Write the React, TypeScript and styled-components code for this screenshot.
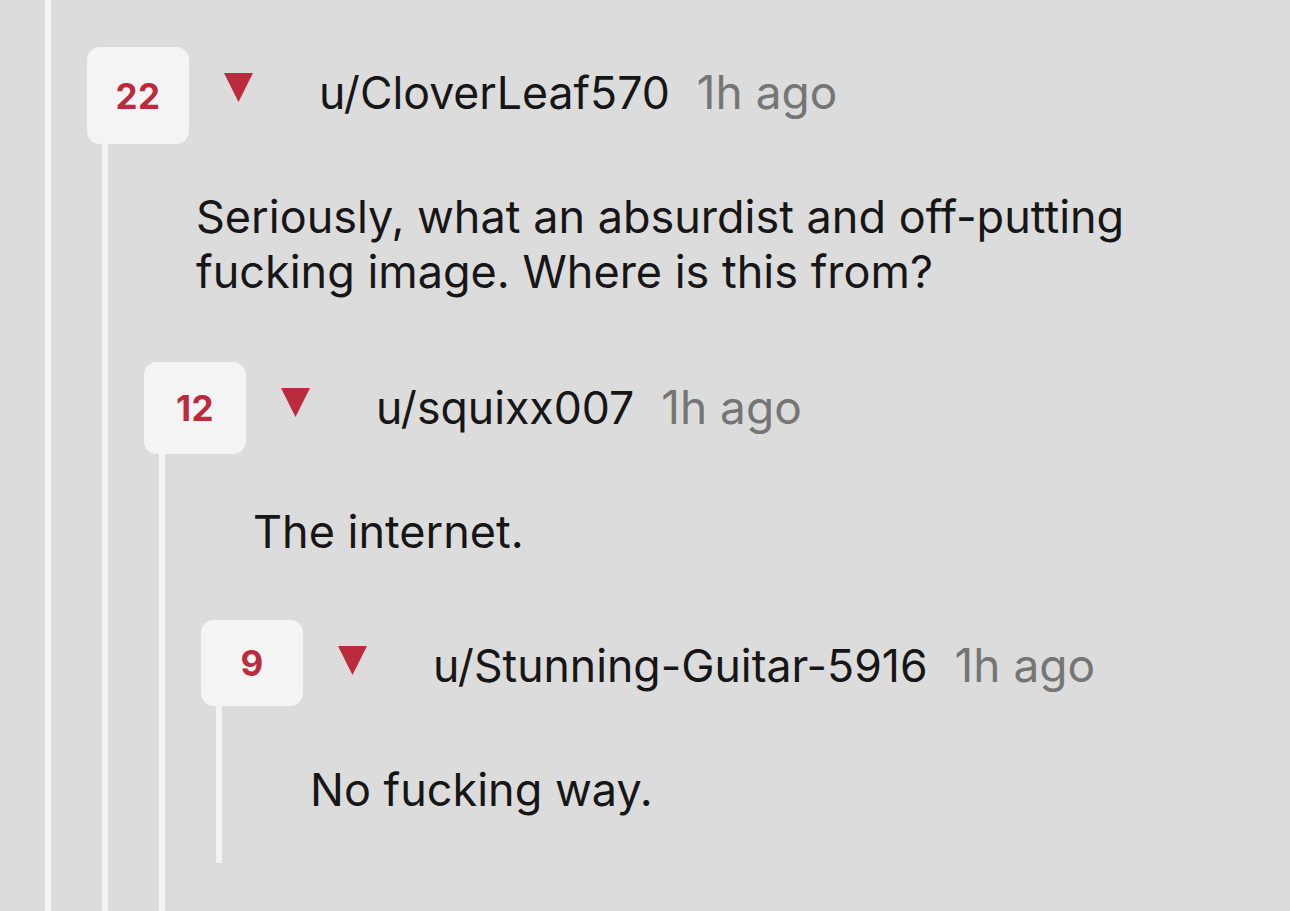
import React, { FC, ReactNode } from "react";
import styled, { createGlobalStyle } from "styled-components";

const GlobalStyle = createGlobalStyle`
  html, body {
    margin: 0;
    padding: 0;
    background: #dcdcdc;
    overflow: hidden;
  }
  body {
    font-family: Inter, "Noto Sans", "Liberation Sans", sans-serif;
    color: #161616;
  }
`;

const HEADER_H = 97;

const Page = styled.div`
  height: 911px;
  overflow: hidden;
  padding: 0 40px 0 30px;
  box-sizing: border-box;
`;

const Thread = styled.div`
  display: flex;
`;

const Rail = styled.div<{ $lift?: number }>`
  flex-shrink: 0;
  width: 6px;
  margin: ${(p) => -(p.$lift ?? 0)}px 36px 0 15px;
  background: #f4f4f4;
`;

const Replies = styled.div<{ $trail?: number }>`
  flex: 1;
  min-width: 0;
  display: flex;
  flex-direction: column;
  padding-bottom: ${(p) => p.$trail ?? 0}px;
`;

const CommentBlock = styled.div<{ $gap: number }>`
  display: flex;
  flex-direction: column;
  margin-top: ${(p) => p.$gap}px;
`;

const Header = styled.div`
  display: flex;
  align-items: flex-start;
  height: ${HEADER_H}px;
`;

const ScoreBox = styled.div<{ $h: number }>`
  flex-shrink: 0;
  width: 102px;
  height: ${(p) => p.$h}px;
  border-radius: 13px;
  background: #f4f4f4;
  display: flex;
  align-items: center;
  justify-content: center;
  color: #bc2a3d;
  font-size: 35px;
  font-weight: 700;
  letter-spacing: 0.5px;
`;

const Caret = styled.svg`
  flex-shrink: 0;
  width: 29px;
  height: 29px;
  margin: 26px 0 0 35px;
  fill: #bc2a3d;
`;

const Author = styled.div`
  margin: 18px 0 0 66px;
  font-size: 44.6px;
  line-height: 1.2;
  white-space: nowrap;
`;

const Age = styled.span`
  margin-left: 27px;
  font-size: 46px;
  color: #757575;
`;

const Body = styled.p`
  margin: 0;
  padding: 45px 0 46px 52px;
  font-size: 45px;
  line-height: 55px;
`;

type CommentProps = {
  score: number;
  boxH: number;
  user: string;
  age: string;
  text: string;
  gap: number;
  trail?: number;
  children?: ReactNode;
};

const Comment: FC<CommentProps> = ({
  score,
  boxH,
  user,
  age,
  text,
  gap,
  trail,
  children,
}) => (
  <CommentBlock $gap={gap}>
    <Header>
      <ScoreBox $h={boxH}>{score}</ScoreBox>
      <Caret viewBox="0 0 29 29">
        <polygon points="0,0 29,0 14.5,29" />
      </Caret>
      <Author>
        {user}
        <Age>{age}</Age>
      </Author>
    </Header>
    <Thread>
      <Rail $lift={HEADER_H - boxH} />
      <Replies $trail={trail}>
        <Body>{text}</Body>
        {children}
      </Replies>
    </Thread>
  </CommentBlock>
);

const App: FC = () => (
  <>
    <GlobalStyle />
    <Page>
      <Thread>
        <Rail />
        <Replies $trail={400}>
          <Comment
            score={22}
            boxH={97}
            user="u/CloverLeaf570"
            age="1h ago"
            text="Seriously, what an absurdist and off-putting fucking image. Where is this from?"
            gap={47}
            trail={300}
          >
            <Comment
              score={12}
              boxH={92}
              user="u/squixx007"
              age="1h ago"
              text="The internet."
              gap={17}
              trail={200}
            >
              <Comment
                score={9}
                boxH={86}
                user="u/Stunning-Guitar-5916"
                age="1h ago"
                text="No fucking way."
                gap={15}
              />
            </Comment>
          </Comment>
        </Replies>
      </Thread>
    </Page>
  </>
);

export default App;
